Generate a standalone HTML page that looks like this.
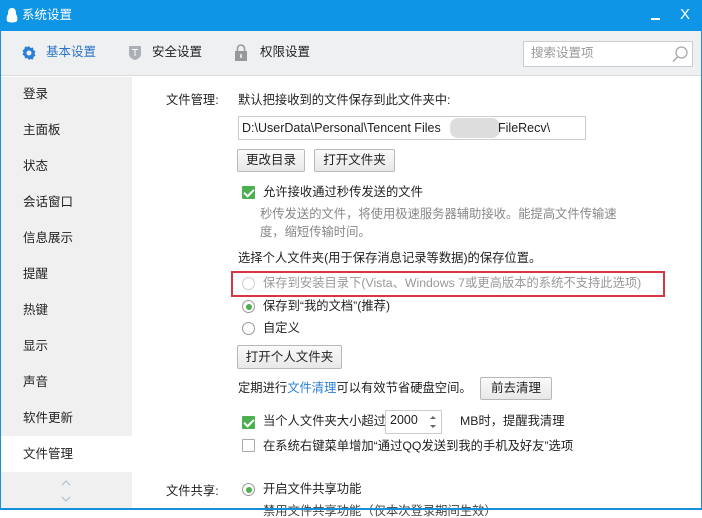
<!DOCTYPE html>
<html><head><meta charset="utf-8"><style>
*{margin:0;padding:0;box-sizing:border-box}
body{width:702px;height:510px;overflow:hidden;background:#fff;font-family:"Liberation Sans","Noto Sans CJK SC",sans-serif;font-size:12.3px;color:#222;position:relative;line-height:1.15}
.a{position:absolute;white-space:nowrap}
.btn{position:absolute;border:1px solid #b8b8b8;background:linear-gradient(#fafafa,#e8e8e8);border-radius:2px;text-align:center;font-size:12.5px;color:#222}
.cb{position:absolute;width:13px;height:13px;background:#4caf50;border-radius:1px}
.cb:after{content:"";position:absolute;left:4px;top:1px;width:4px;height:8px;border:solid #fff;border-width:0 2px 2px 0;transform:rotate(45deg)}
.rd{position:absolute;width:13px;height:13px;border:1px solid #999;border-radius:50%;background:#fff}
.rd.on:after{content:"";position:absolute;left:2.5px;top:2.5px;width:6px;height:6px;border-radius:50%;background:#4caf50}
.side{position:absolute;left:23px;font-size:12.5px}
</style></head><body>
<div class="a" style="left:0;top:0;width:702px;height:31px;background:#0f95e6"></div>
<svg class="a" style="left:6px;top:8px" width="12" height="16"><path d="M6 0C2.5 0 2 3 2 6C1 8 0 10 1 13C2 15 10 15 11 13C12 10 11 8 10 6C10 3 9.5 0 6 0Z" fill="#fff"/></svg>
<div class="a" style="left:22px;top:8px;color:#fff;font-size:12.5px">系统设置</div>
<div class="a" style="left:651px;top:18px;width:9px;height:2px;background:#fff"></div>
<div class="a" style="left:680px;top:6px;color:#fff;font-size:15px">X</div>
<div class="a" style="left:0;top:31px;width:702px;height:45px;background:#eef0f2;border-bottom:1px solid #dcdcdc"></div>
<div class="a" style="left:0;top:31px;width:1px;height:479px;background:#1a8fd9"></div>
<div class="a" style="left:701px;top:31px;width:1px;height:479px;background:#1a8fd9"></div>
<svg class="a" style="left:21px;top:45px" width="16" height="16" viewBox="0 0 16 16"><path d="M8 1l1.5 2 2.5-.5.5 2.5 2 1.5-1 2 1 2-2 1.5-.5 2.5-2.5-.5L8 15l-1.5-2-2.5.5-.5-2.5-2-1.5 1-2-1-2 2-1.5.5-2.5 2.5.5z" fill="#2b7fd6"/><circle cx="8" cy="8" r="2.5" fill="#eef0f2"/></svg>
<div class="a" style="left:46px;top:45px;color:#2b74c8;font-size:12.5px">基本设置</div>
<svg class="a" style="left:128px;top:45px" width="14" height="16"><path d="M1 1h12v8c0 3-3 5-6 6C4 14 1 12 1 9z" fill="#aab0b5"/><path d="M4 4h6v1H7.5v6h-1V5H4z" fill="#fff"/></svg>
<div class="a" style="left:152px;top:45px;font-size:12.5px">安全设置</div>
<svg class="a" style="left:235px;top:44px" width="12" height="17"><path d="M2.5 7V4.5a3.5 3.5 0 017 0V7" stroke="#999" stroke-width="1.6" fill="none"/><rect x="0" y="7" width="12" height="10" fill="#999"/><rect x="5.3" y="10" width="1.4" height="4" fill="#fff"/></svg>
<div class="a" style="left:260px;top:45px;font-size:12.5px">权限设置</div>
<div class="a" style="left:523px;top:41px;width:170px;height:26px;background:#fff;border:1px solid #ccc"></div>
<div class="a" style="left:531px;top:46px;color:#999;font-size:12.5px">搜索设置项</div>
<svg class="a" style="left:671px;top:45px" width="18" height="18"><circle cx="10.5" cy="7.5" r="5.5" stroke="#aaa" stroke-width="1.3" fill="none"/><path d="M7 11.5L2 16.5" stroke="#aaa" stroke-width="1.5"/></svg>
<div class="a" style="left:1px;top:77px;width:131px;height:431px;background:#f0f0f0"></div>
<div class="a" style="left:1px;top:436px;width:131px;height:36px;background:#fff"></div>
<div class="side a" style="top:87px">登录</div>
<div class="side a" style="top:123px">主面板</div>
<div class="side a" style="top:159px">状态</div>
<div class="side a" style="top:195px">会话窗口</div>
<div class="side a" style="top:231px">信息展示</div>
<div class="side a" style="top:267px">提醒</div>
<div class="side a" style="top:303px">热键</div>
<div class="side a" style="top:339px">显示</div>
<div class="side a" style="top:375px">声音</div>
<div class="side a" style="top:411px">软件更新</div>
<div class="side a" style="top:447px">文件管理</div>
<svg class="a" style="left:60px;top:479px" width="12" height="26"><path d="M2 6l4-4 4 4M2 18l4 4 4-4" stroke="#b8c4d0" stroke-width="1.3" fill="none"/></svg>
<div class="a" style="left:166px;top:93px">文件管理:</div>
<div class="a" style="left:238px;top:93px">默认把接收到的文件保存到此文件夹中:</div>
<div class="a" style="left:238px;top:116px;width:348px;height:24px;border:1px solid #ccc"></div>
<div class="a" style="left:242px;top:121px;font-size:12.5px">D:\UserData\Personal\Tencent Files</div>
<div class="a" style="left:450px;top:118px;width:50px;height:20px;background:#ddd;border-radius:8px"></div>
<div class="a" style="left:498px;top:121px;font-size:12.5px">FileRecv\</div>
<div class="btn" style="left:237px;top:149px;width:68px;height:23px;line-height:21px">更改目录</div>
<div class="btn" style="left:314px;top:149px;width:81px;height:23px;line-height:21px">打开文件夹</div>
<div class="cb" style="left:242px;top:186px"></div>
<div class="a" style="left:263px;top:185px">允许接收通过秒传发送的文件</div>
<div class="a" style="left:260px;top:205px;color:#888;line-height:18px">秒传发送的文件，将使用极速服务器辅助接收。能提高文件传输速<br>度，缩短传输时间。</div>
<div class="a" style="left:238px;top:251px">选择个人文件夹(用于保存消息记录等数据)的保存位置。</div>
<div class="a" style="left:231px;top:271px;width:434px;height:26px;border:2px solid #d9363e"></div>
<div class="rd" style="left:242px;top:277px;border-color:#ccc"></div>
<div class="a" style="left:263px;top:276px;color:#999">保存到安装目录下(Vista、Windows 7或更高版本的系统不支持此选项)</div>
<div class="rd on" style="left:242px;top:300px"></div>
<div class="a" style="left:263px;top:299px">保存到“我的文档”(推荐)</div>
<div class="rd" style="left:242px;top:322px"></div>
<div class="a" style="left:263px;top:321px">自定义</div>
<div class="btn" style="left:237px;top:345px;width:105px;height:24px;line-height:22px">打开个人文件夹</div>
<div class="a" style="left:238px;top:381px">定期进行<span style="color:#2b7fd6">文件清理</span>可以有效节省硬盘空间。</div>
<div class="btn" style="left:480px;top:377px;width:72px;height:23px;line-height:21px">前去清理</div>
<div class="cb" style="left:242px;top:416px"></div>
<div class="a" style="left:263px;top:414px">当个人文件夹大小超过</div>
<div class="a" style="left:385px;top:410px;width:57px;height:24px;border:1px solid #ccc"></div>
<div class="a" style="left:390px;top:413px;font-size:12.5px">2000</div>
<svg class="a" style="left:429px;top:414px" width="8" height="16"><path d="M1 5l3-3 3 3zM1 11l3 3 3-3z" fill="#666"/></svg>
<div class="a" style="left:460px;top:414px">MB时，提醒我清理</div>
<div class="rd" style="left:242px;top:439px;border-radius:1px;border-color:#aaa"></div>
<div class="a" style="left:263px;top:439px">在系统右键菜单增加“通过QQ发送到我的手机及好友”选项</div>
<div class="a" style="left:166px;top:484px">文件共享:</div>
<div class="rd on" style="left:242px;top:483px"></div>
<div class="a" style="left:263px;top:482px">开启文件共享功能</div>
<div class="a" style="left:263px;top:504px;color:#444">禁用文件共享功能（仅本次登录期间生效）</div>
<div class="a" style="left:0;top:508px;width:702px;height:2px;background:#1a8fd9"></div>
</body></html>
